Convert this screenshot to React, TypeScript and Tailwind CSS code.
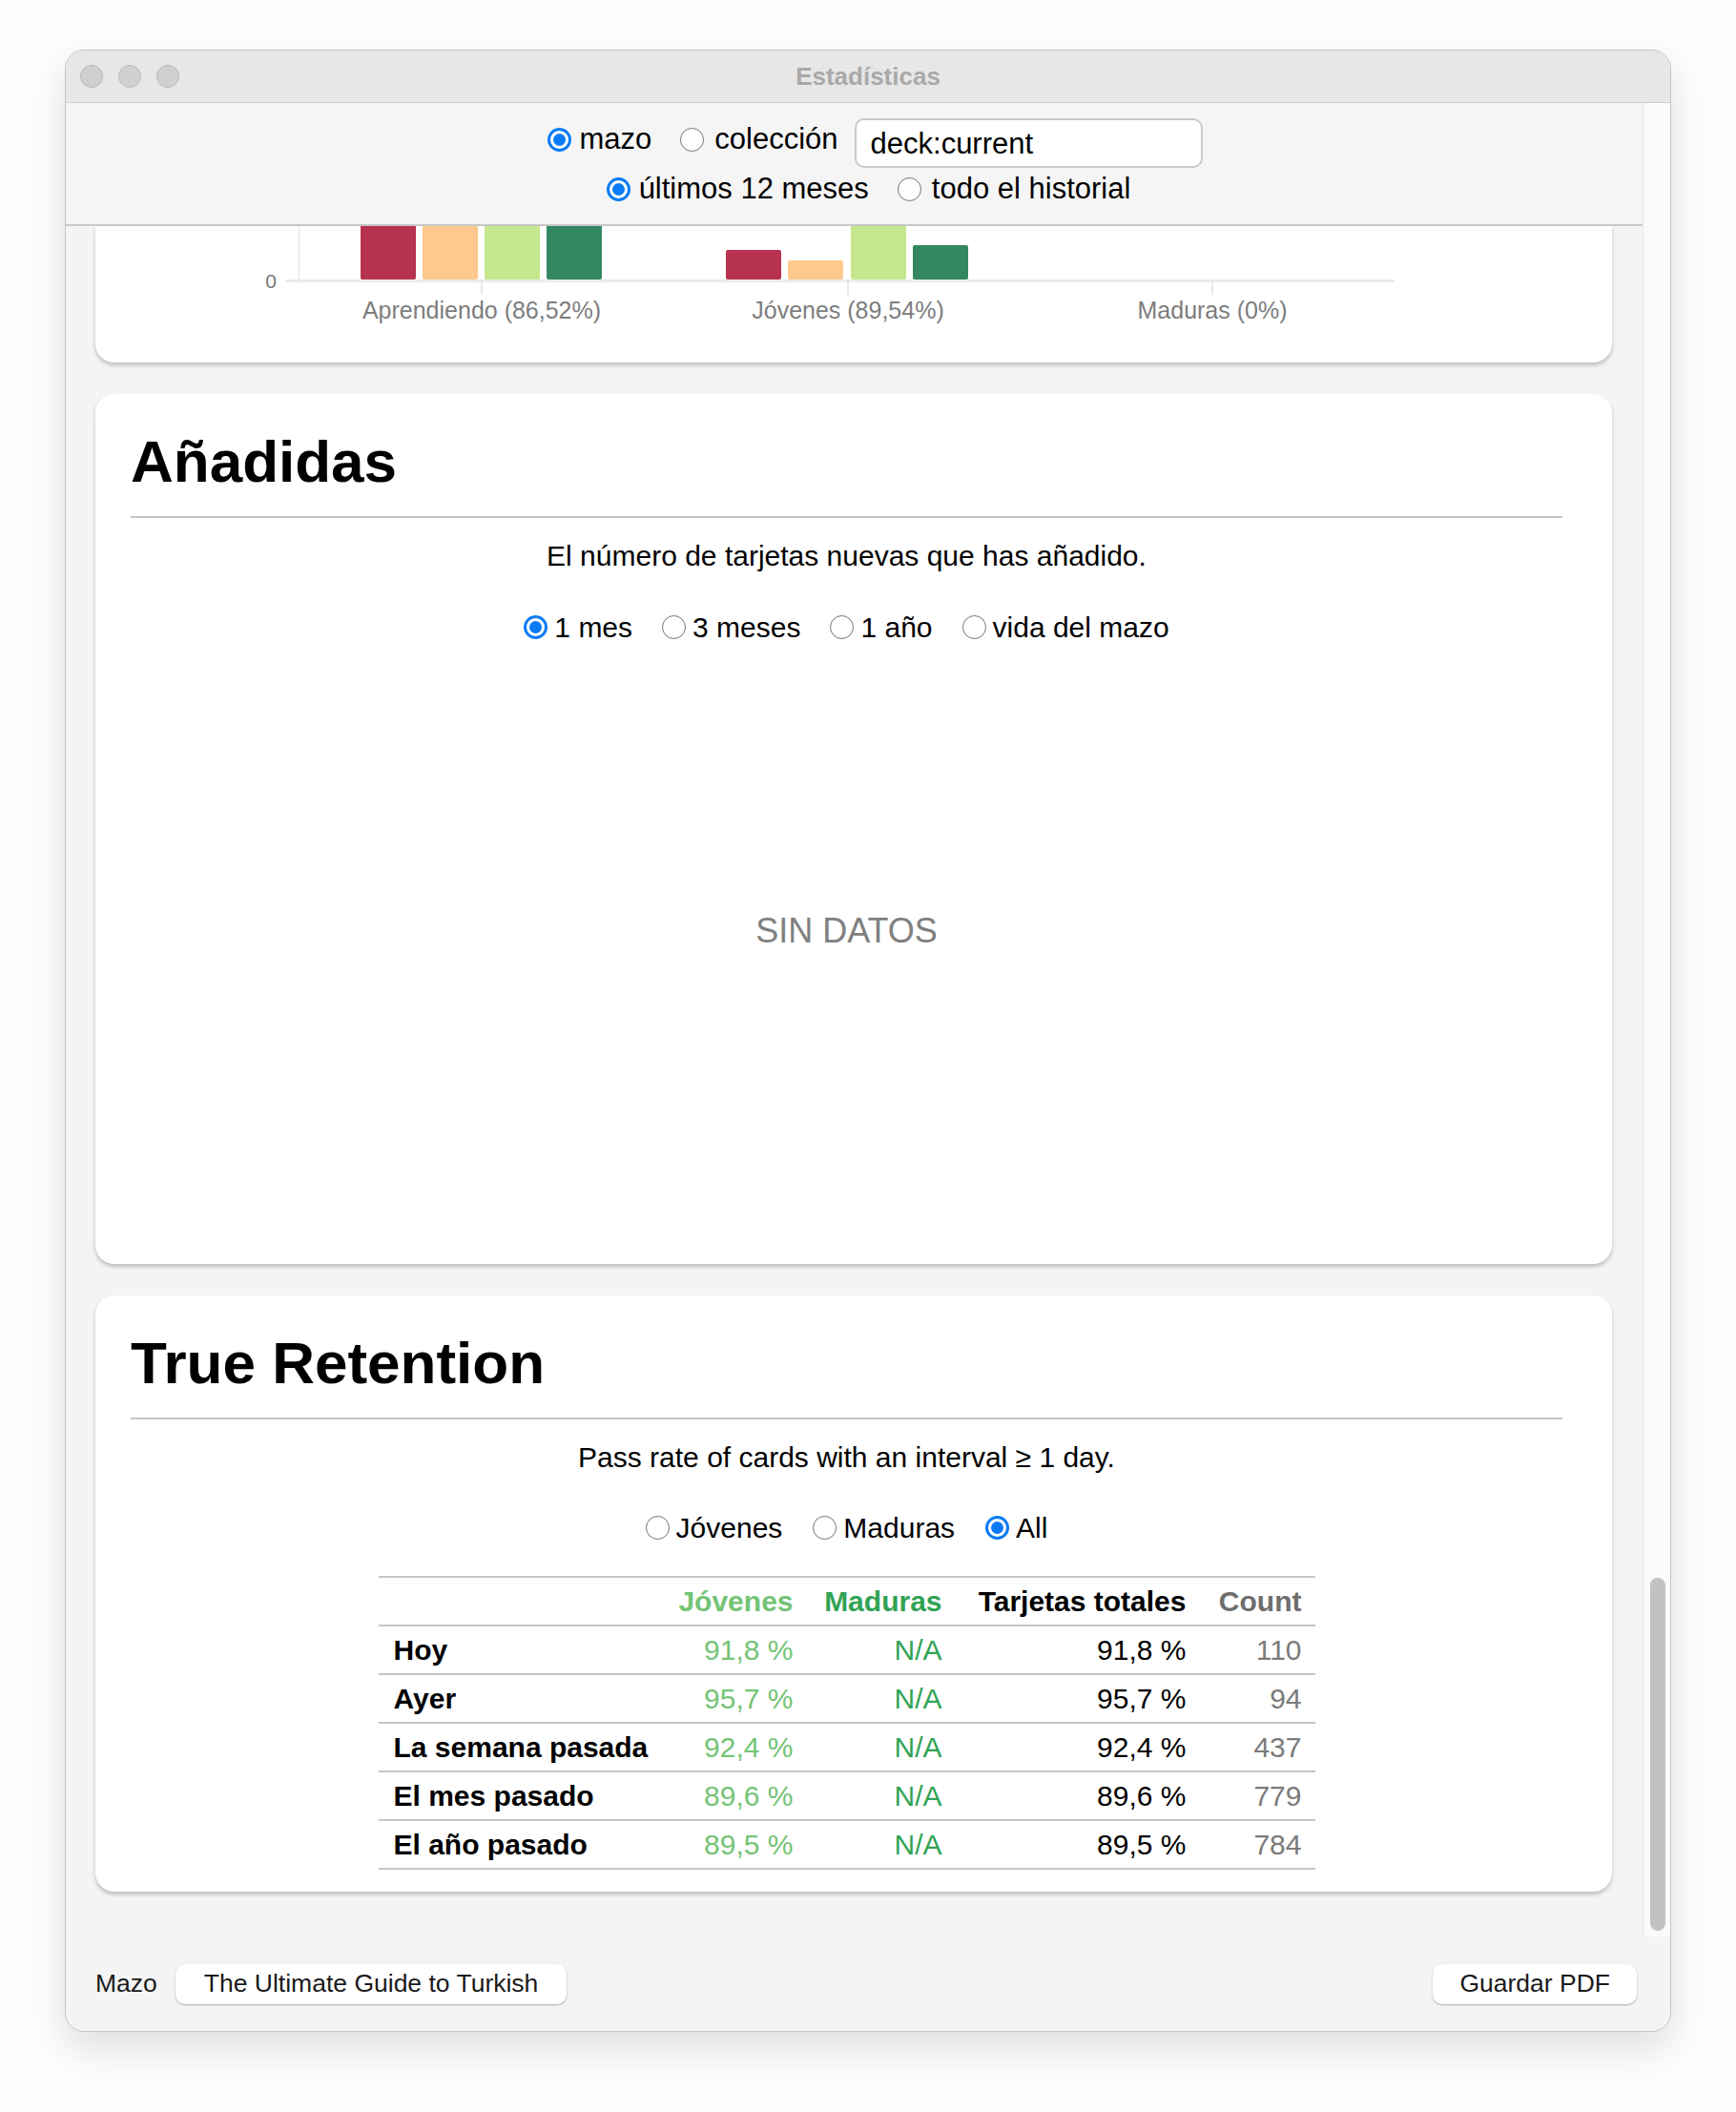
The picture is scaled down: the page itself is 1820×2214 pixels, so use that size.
import React from "react";

const FONT = { fontFamily: '"Liberation Sans", Arial, sans-serif' };

function Radio({ checked }: { checked?: boolean }) {
  if (checked) {
    return (
      <span className="w-[25px] h-[25px] rounded-full border-[3px] border-[#0a7bf5] bg-white flex items-center justify-center shrink-0">
        <span className="w-[13px] h-[13px] rounded-full bg-[#0a7bf5]" />
      </span>
    );
  }
  return <span className="w-[25px] h-[25px] rounded-full border-[1.5px] border-[#747474] bg-white shrink-0" />;
}

function RadioItem({ label, checked, gap = "gap-[7px]" }: { label: string; checked?: boolean; gap?: string }) {
  return (
    <label className={`flex items-center ${gap} h-[40px]`}>
      <Radio checked={checked} />
      <span>{label}</span>
    </label>
  );
}

function CardTitle({ children }: { children: React.ReactNode }) {
  return (
    <>
      <h1 className="text-[62px] leading-[66px] h-[66px] font-bold text-black">{children}</h1>
      <div className="mt-[24px] h-[2px] bg-[#c6c6c6]" />
    </>
  );
}

function ChartTop() {
  const bars = [
    { x: 278, y: -10, c: "#b7324f" },
    { x: 343, y: -10, c: "#fdc98c" },
    { x: 408, y: -10, c: "#c5e78e" },
    { x: 473, y: -10, c: "#348861" },
    { x: 661, y: 25, c: "#b7324f" },
    { x: 726, y: 36, c: "#fdc98c" },
    { x: 792, y: -10, c: "#c5e78e" },
    { x: 857, y: 20, c: "#348861" },
  ];
  return (
    <svg width="1590" height="142" viewBox="0 0 1590 142" className="block">
      <line x1="213.5" y1="0" x2="213.5" y2="57" stroke="#e6e6e6" strokeWidth="1.5" />
      {bars.map((b, i) => (
        <rect key={i} x={b.x} y={b.y} width="58" height={56 - b.y} rx="2" fill={b.c} />
      ))}
      <line x1="199" y1="57.5" x2="1362" y2="57.5" stroke="#ebebeb" strokeWidth="3" />
      {[405, 789, 1171].map((x) => (
        <line key={x} x1={x} y1="57" x2={x} y2="72" stroke="#e2e2e2" strokeWidth="1.5" />
      ))}
      <text x="190" y="65" textAnchor="end" fontSize="21" fill="#777" style={FONT}>0</text>
      <text x="405" y="97" textAnchor="middle" fontSize="25" fill="#7d7d7d" style={FONT}>Aprendiendo (86,52%)</text>
      <text x="789" y="97" textAnchor="middle" fontSize="25" fill="#7d7d7d" style={FONT}>Jóvenes (89,54%)</text>
      <text x="1171" y="97" textAnchor="middle" fontSize="25" fill="#7d7d7d" style={FONT}>Maduras (0%)</text>
    </svg>
  );
}

const rows = [
  ["Hoy", "91,8 %", "N/A", "91,8 %", "110"],
  ["Ayer", "95,7 %", "N/A", "95,7 %", "94"],
  ["La semana pasada", "92,4 %", "N/A", "92,4 %", "437"],
  ["El mes pasado", "89,6 %", "N/A", "89,6 %", "779"],
  ["El año pasado", "89,5 %", "N/A", "89,5 %", "784"],
];

function RetentionTable() {
  const grid = "grid grid-cols-[304px_147px_156px_256px_119px] h-[51px] items-center border-b-2 border-[#c6c6c6]";
  return (
    <div className="w-[982px] mx-auto border-t-2 border-[#c6c6c6] text-[30px]">
      <div className={`${grid} font-bold`}>
        <div />
        <div className="text-right pr-[16px] text-[#74c476]">Jóvenes</div>
        <div className="text-right pr-[16px] text-[#31a354]">Maduras</div>
        <div className="text-right pr-[16px] text-black">Tarjetas totales</div>
        <div className="text-right pr-[14px] text-[#6e6e6e]">Count</div>
      </div>
      {rows.map((r) => (
        <div key={r[0]} className={grid}>
          <div className="pl-[16px] font-bold text-black">{r[0]}</div>
          <div className="text-right pr-[16px] text-[#74c476]">{r[1]}</div>
          <div className="text-right pr-[16px] text-[#31a354]">{r[2]}</div>
          <div className="text-right pr-[16px] text-black">{r[3]}</div>
          <div className="text-right pr-[14px] text-[#7b7b7b]">{r[4]}</div>
        </div>
      ))}
    </div>
  );
}

export default function App() {
  return (
    <div className="w-[1820px] h-[2214px] bg-[#fdfdfd] pt-[52px] pl-[68px]" style={FONT}>
      <div className="w-[1684px] h-[2078px] rounded-[20px] border border-[#c4c4c4] overflow-hidden flex flex-col bg-[#f4f4f4] shadow-[0_18px_40px_rgba(0,0,0,0.12)]">
        {/* Title bar */}
        <div className="h-[55px] shrink-0 bg-[#e7e7e7] border-b border-[#cfcfcf] flex items-center relative">
          <div className="flex gap-[16px] pl-[15px]">
            <span className="w-[24px] h-[24px] rounded-full bg-[#d0d0d0] border border-[#b9b9b9]" />
            <span className="w-[24px] h-[24px] rounded-full bg-[#d0d0d0] border border-[#b9b9b9]" />
            <span className="w-[24px] h-[24px] rounded-full bg-[#d0d0d0] border border-[#b9b9b9]" />
          </div>
          <div className="absolute inset-0 flex items-center justify-center text-[26px] font-bold text-[#a9a9a9] pointer-events-none">
            Estadísticas
          </div>
        </div>

        {/* Middle */}
        <div className="h-[1922px] shrink-0 flex">
          <div className="w-[1653px] flex flex-col overflow-hidden">
            {/* Toolbar */}
            <div className="h-[129px] shrink-0 bg-[#f5f5f5] border-b-2 border-[#c8c8c8] text-[31px] text-black flex flex-col pt-[16px]">
              <div className="flex items-start justify-center pl-[44px]">
                <div className="flex gap-[30px] pt-[2px]">
                  <RadioItem label="mazo" checked gap="gap-[8px]" />
                  <RadioItem label="colección" gap="gap-[11px]" />
                </div>
                <div className="ml-[17px] w-[365px] h-[52px] rounded-[10px] border-2 border-[#c9c9c9] bg-white flex items-center pl-[15px] pt-[2px]">
                  deck:current
                </div>
              </div>
              <div className="flex justify-center gap-[30px] pl-[30px] mt-[2px]">
                <RadioItem label="últimos 12 meses" checked gap="gap-[9px]" />
                <RadioItem label="todo el historial" gap="gap-[11px]" />
              </div>
            </div>

            {/* Scroll content */}
            <div className="flex flex-col pl-[31px] pr-[32px]">
              <div className="h-[143px] bg-white rounded-b-[20px] overflow-hidden shadow-[0_3px_4px_rgba(0,0,0,0.22)]">
                <ChartTop />
              </div>

              <div className="mt-[33px] h-[912px] bg-white rounded-[20px] shadow-[0_3px_4px_rgba(0,0,0,0.22)] pt-[38px] pl-[37px] pr-[52px] flex flex-col">
                <CardTitle>Añadidas</CardTitle>
                <p className="mt-[20px] h-[40px] leading-[40px] text-[30px] text-center text-black">
                  El número de tarjetas nuevas que has añadido.
                </p>
                <div className="mt-[34px] flex justify-center gap-[31px] text-[30px] text-black">
                  <RadioItem label="1 mes" checked />
                  <RadioItem label="3 meses" />
                  <RadioItem label="1 año" />
                  <RadioItem label="vida del mazo" />
                </div>
                <div className="h-[598px] flex items-center justify-center text-[36px] text-[#808080]">SIN DATOS</div>
              </div>

              <div className="mt-[33px] h-[625px] bg-white rounded-[20px] shadow-[0_3px_4px_rgba(0,0,0,0.22)] pt-[38px] pl-[37px] pr-[52px] flex flex-col">
                <CardTitle>True Retention</CardTitle>
                <p className="mt-[20px] h-[40px] leading-[40px] text-[30px] text-center text-black">
                  Pass rate of cards with an interval ≥ 1 day.
                </p>
                <div className="mt-[33px] flex justify-center gap-[32px] text-[30px] text-black">
                  <RadioItem label="Jóvenes" />
                  <RadioItem label="Maduras" />
                  <RadioItem label="All" checked />
                </div>
                <div className="mt-[31px]">
                  <RetentionTable />
                </div>
              </div>
            </div>
          </div>

          {/* Scrollbar */}
          <div className="w-[29px] shrink-0 bg-[#fafafa] border-l border-[#e4e4e4] flex flex-col justify-end pb-[6px] pl-[7px]">
            <div className="w-[16px] h-[370px] rounded-full bg-[#c2c2c2]" />
          </div>
        </div>

        {/* Footer */}
        <div className="flex-1 flex items-center pl-[31px] pr-[35px] text-[26.5px] text-[#1a1a1a]">
          <span>Mazo</span>
          <div className="ml-[19px] h-[42px] px-[30px] rounded-[10px] bg-white shadow-[0_1px_2px_rgba(0,0,0,0.3)] flex items-center">
            The Ultimate Guide to Turkish
          </div>
          <div className="ml-auto h-[42px] px-[28px] rounded-[10px] bg-white shadow-[0_1px_2px_rgba(0,0,0,0.3)] flex items-center">
            Guardar PDF
          </div>
        </div>
      </div>
    </div>
  );
}
